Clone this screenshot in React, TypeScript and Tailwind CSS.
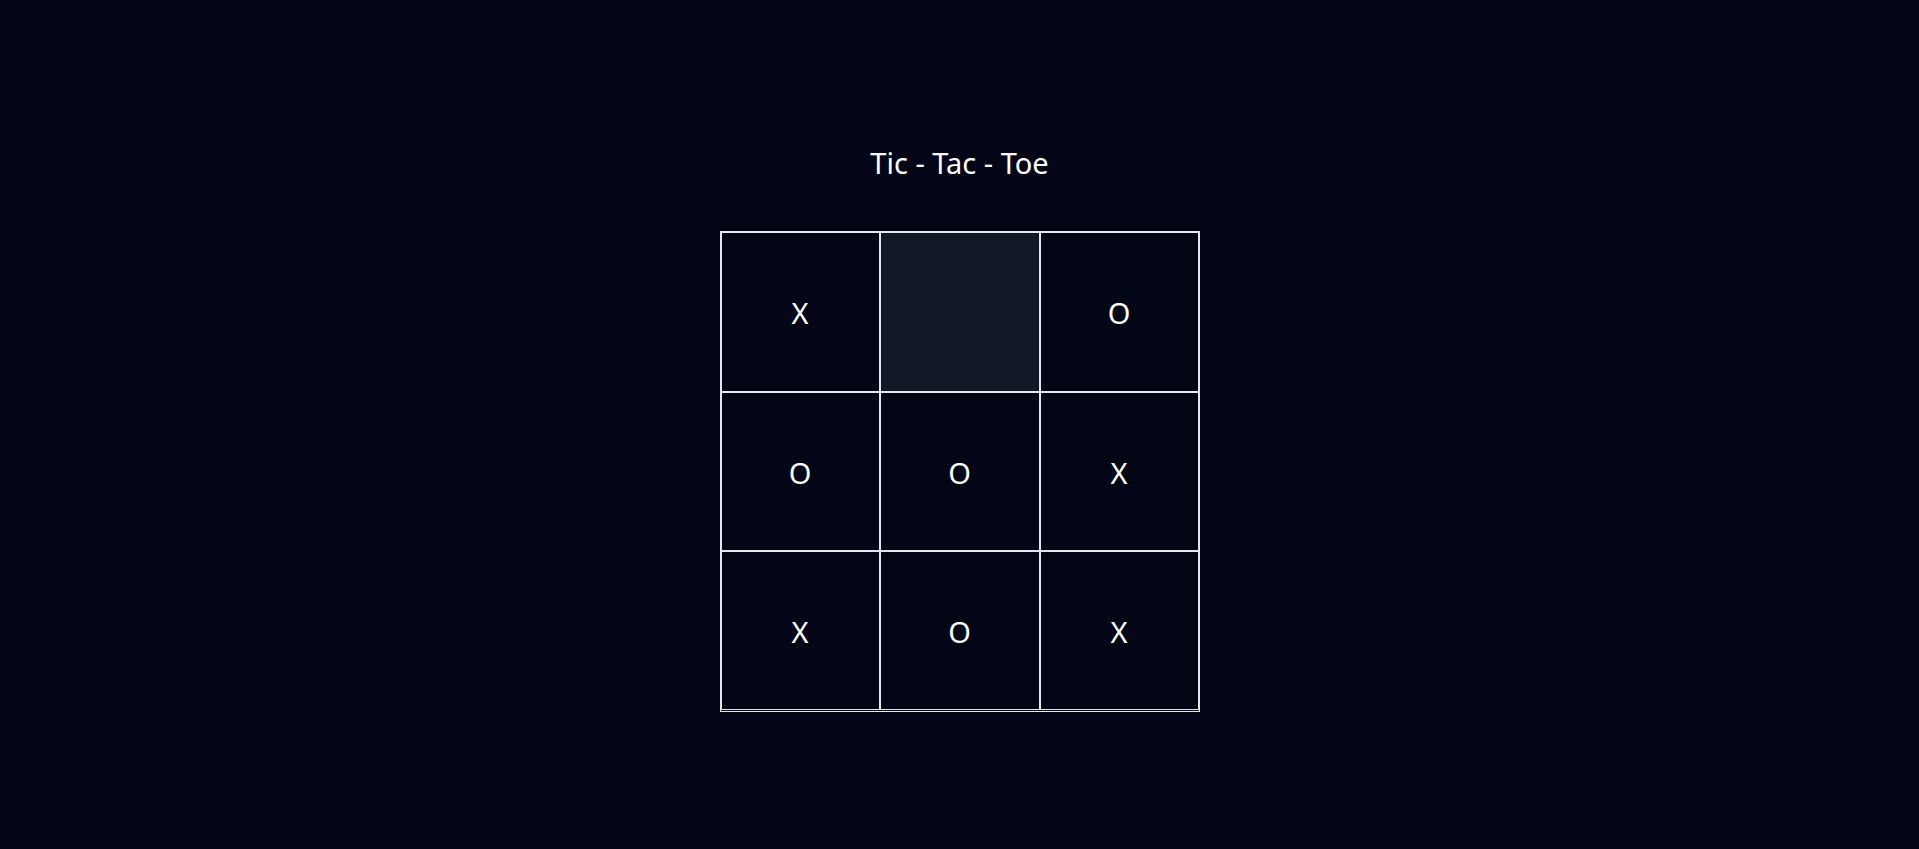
import { useState } from "react";

type Cell = "X" | "O" | "";

const initialBoard: Cell[] = ["X", "", "O", "O", "O", "X", "X", "O", "X"];

const App = () => {
  const [board, setBoard] = useState<Cell[]>(initialBoard);
  const [hovered, setHovered] = useState<number | null>(1);

  const handleClick = (index: number) => {
    if (board[index]) return;
    const next = [...board];
    next[index] = board.filter((c) => c).length % 2 === 0 ? "X" : "O";
    setBoard(next);
  };

  return (
    <div className="min-h-screen w-full bg-[#020617] text-white font-['Noto_Sans','Open_Sans',sans-serif]">
      <div className="flex flex-col items-center pt-[143px]">
        <h1 className="text-[29px] leading-[40px] font-normal">Tic - Tac - Toe</h1>
        <div className="mt-[48px] w-[480px] h-[481px] border border-[#e5e7eb]">
          <div className="grid grid-cols-[159px_160px_159px] grid-rows-[160px_159px_159px]">
            {board.map((cell, i) => (
              <div
                key={i}
                onClick={() => handleClick(i)}
                onMouseEnter={() => setHovered(i)}
                className={`border border-[#e5e7eb] flex items-center justify-center pt-[2px] text-[29px] cursor-pointer ${
                  hovered === i ? "bg-[#111827]" : "bg-[#020617]"
                }`}
              >
                {cell}
              </div>
            ))}
          </div>
        </div>
      </div>
    </div>
  );
};

export default App;
